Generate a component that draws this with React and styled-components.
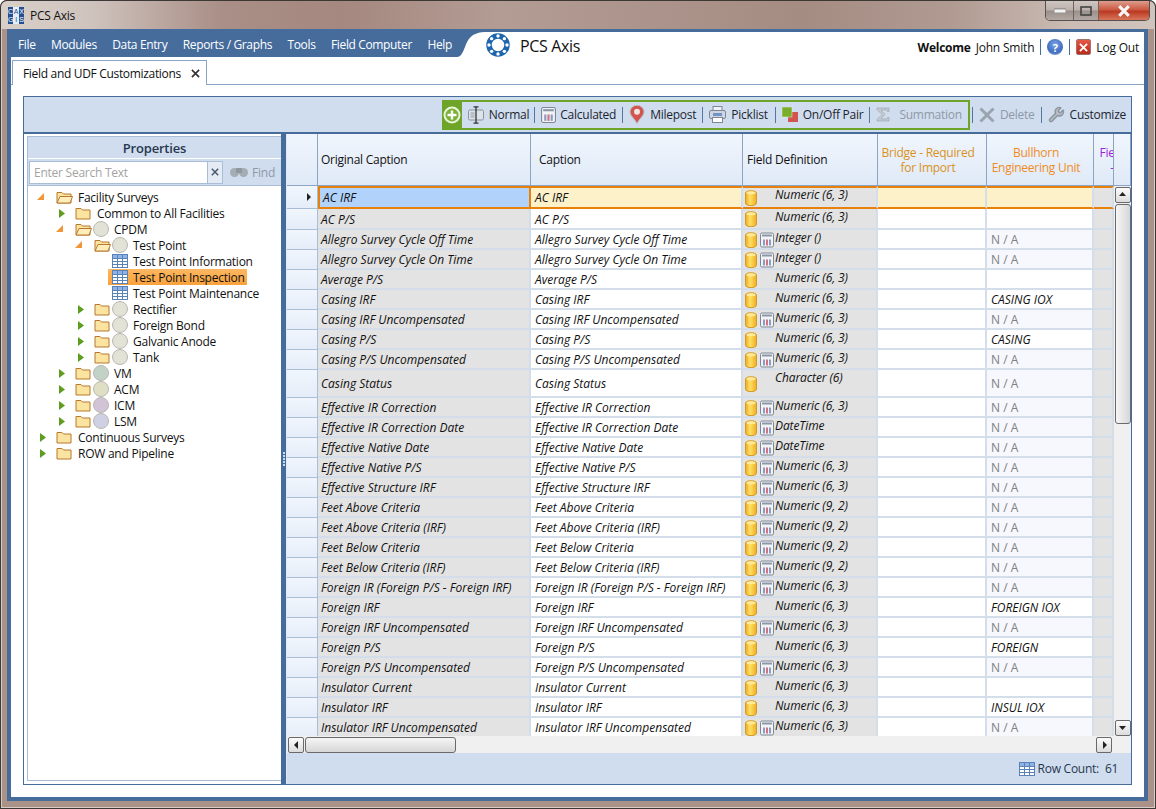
import React from 'react';
import styled, { createGlobalStyle } from 'styled-components';
import { Wrench } from 'lucide-react';

const BLUE = '#466c9c';
const LINE = '#8aa4c4';
const CELLLINE = '#d3deea';
const ORANGE = '#e8810c';
const COLS = [31, 213, 212, 135, 109, 107, 20];

const N63 = 'Numeric (6, 3)';
const N92 = 'Numeric (9, 2)';

const rows = [
  { name: 'AC IRF', type: N63, unit: '', h: 23, selected: true },
  { name: 'AC P/S', type: N63, unit: '', h: 21 },
  { name: 'Allegro Survey Cycle Off Time', calc: true, type: 'Integer ()', unit: 'N / A' },
  { name: 'Allegro Survey Cycle On Time', calc: true, type: 'Integer ()', unit: 'N / A' },
  { name: 'Average P/S', type: N63, unit: '' },
  { name: 'Casing IRF', type: N63, unit: 'CASING IOX' },
  { name: 'Casing IRF Uncompensated', calc: true, type: N63, unit: 'N / A' },
  { name: 'Casing P/S', type: N63, unit: 'CASING' },
  { name: 'Casing P/S Uncompensated', calc: true, type: N63, unit: 'N / A' },
  { name: 'Casing Status', type: 'Character (6)', unit: 'N / A', h: 28 },
  { name: 'Effective IR Correction', calc: true, type: N63, unit: 'N / A' },
  { name: 'Effective IR Correction Date', calc: true, type: 'DateTime', unit: 'N / A' },
  { name: 'Effective Native Date', calc: true, type: 'DateTime', unit: 'N / A' },
  { name: 'Effective Native P/S', calc: true, type: N63, unit: 'N / A' },
  { name: 'Effective Structure IRF', calc: true, type: N63, unit: 'N / A' },
  { name: 'Feet Above Criteria', calc: true, type: N92, unit: 'N / A' },
  { name: 'Feet Above Criteria (IRF)', calc: true, type: N92, unit: 'N / A' },
  { name: 'Feet Below Criteria', calc: true, type: N92, unit: 'N / A' },
  { name: 'Feet Below Criteria (IRF)', calc: true, type: N92, unit: 'N / A' },
  { name: 'Foreign IR (Foreign P/S - Foreign IRF)', calc: true, type: N63, unit: 'N / A' },
  { name: 'Foreign IRF', type: N63, unit: 'FOREIGN IOX' },
  { name: 'Foreign IRF Uncompensated', calc: true, type: N63, unit: 'N / A' },
  { name: 'Foreign P/S', type: N63, unit: 'FOREIGN' },
  { name: 'Foreign P/S Uncompensated', calc: true, type: N63, unit: 'N / A' },
  { name: 'Insulator Current', type: N63, unit: '' },
  { name: 'Insulator IRF', type: N63, unit: 'INSUL IOX' },
  { name: 'Insulator IRF Uncompensated', calc: true, type: N63, unit: 'N / A' },
];

const tree = [
  { level: 0, arrow: 'open', folder: 'open', text: 'Facility Surveys' },
  { level: 1, arrow: 'closed', folder: 'closed', text: 'Common to All Facilities' },
  { level: 1, arrow: 'open', folder: 'open', dot: '#e2e2d6', text: 'CPDM' },
  { level: 2, arrow: 'open', folder: 'open', dot: '#e2e2d6', text: 'Test Point' },
  { level: 3, grid: true, text: 'Test Point Information' },
  { level: 3, grid: true, text: 'Test Point Inspection', active: true },
  { level: 3, grid: true, text: 'Test Point Maintenance' },
  { level: 2, arrow: 'closed', folder: 'closed', dot: '#e2e2d6', text: 'Rectifier' },
  { level: 2, arrow: 'closed', folder: 'closed', dot: '#e2e2d6', text: 'Foreign Bond' },
  { level: 2, arrow: 'closed', folder: 'closed', dot: '#e2e2d6', text: 'Galvanic Anode' },
  { level: 2, arrow: 'closed', folder: 'closed', dot: '#e2e2d6', text: 'Tank' },
  { level: 1, arrow: 'closed', folder: 'closed', dot: '#c3d2c6', text: 'VM' },
  { level: 1, arrow: 'closed', folder: 'closed', dot: '#dfdfc6', text: 'ACM' },
  { level: 1, arrow: 'closed', folder: 'closed', dot: '#d3c3d6', text: 'ICM' },
  { level: 1, arrow: 'closed', folder: 'closed', dot: '#d0d0e4', text: 'LSM' },
  { level: 0, arrow: 'closed', folder: 'closed', text: 'Continuous Surveys' },
  { level: 0, arrow: 'closed', folder: 'closed', text: 'ROW and Pipeline' },
];

const Global = createGlobalStyle`
  html, body { margin: 0; padding: 0; background: #fff; }
  body { font: 12px "Open Sans", "Noto Sans", sans-serif; letter-spacing: -0.25px; color: #111; }
  * { box-sizing: border-box; }
`;

const Frame = styled.div`
  width: 1156px;
  height: 809px;
  display: flex;
  flex-direction: column;
  padding: 0 8px 8px 7px;
  border-radius: 7px 7px 0 0;
  background: #ab9289;
  box-shadow: inset 0 0 0 1px #3c3836, inset 0 0 0 2px #d8ccc6;
  overflow: hidden;
`;

const TitleBar = styled.div`
  height: 29px;
  flex: none;
  margin: 0 -8px 0 -7px;
  padding: 0 6px 3px 7px;
  display: flex;
  align-items: flex-start;
  border-radius: 7px 7px 0 0;
  border: 1px solid #3c3836;
  border-bottom: 0;
  background: linear-gradient(90deg, #d9d0ca 0, #cfc3bd 90px, #a98f87 220px, #a5887f 340px, #b39c94 500px, #a58c83 800px, #b09a91 950px, #cbbcb4 1070px, #cfc4bd 1156px);
`;

const AppTitle = styled.span`
  margin: 6px 0 0 6px;
  color: #111;
`;

const WinButtons = styled.div`
  margin-left: auto;
  margin-right: -1px;
  display: flex;
  height: 20px;
  border: 1px solid #57504d;
  border-top: 0;
  border-radius: 0 0 5px 5px;
  overflow: hidden;
`;

const WinButton = styled.div`
  width: ${p => p.$w}px;
  display: flex;
  align-items: center;
  justify-content: center;
  border-right: 1px solid #6d6460;
  background: ${p => p.$close
    ? 'linear-gradient(#dd9d8c 0, #cc5a43 45%, #bb3a24 55%, #d8765a 100%)'
    : 'linear-gradient(#cfc6c1 0, #bcb1ac 48%, #9b8f8a 52%, #b2a8a3 100%)'};
  &:last-child { border-right: 0; }
`;

const Client = styled.div`
  flex: 1;
  display: flex;
  flex-direction: column;
  min-height: 0;
  background: #fff;
  border: 4px solid ${BLUE};
  border-top-width: 3px;
`;

const TopBar = styled.div`
  height: 25px;
  display: flex;
  align-items: stretch;
  flex: none;
`;

const Menu = styled.div`
  width: 446px;
  flex: none;
  display: flex;
  align-items: center;
  gap: 15.5px;
  padding-left: 7px;
  color: #fff;
  white-space: nowrap;
  background: ${BLUE};
  letter-spacing: -0.36px;
`;

const LogoRow = styled.div`
  display: flex;
  align-items: center;
  margin-left: 2px;
  gap: 10px;
  padding-top: 3px;
  font-size: 16px;
  letter-spacing: -0.35px;
`;

const UserArea = styled.div`
  margin-left: auto;
  margin-right: 5px;
  display: flex;
  align-items: center;
  gap: 5px;
  padding-top: 5px;
  letter-spacing: -0.2px;
`;

const Welcome = styled.b`
  font-weight: 700;
  letter-spacing: -0.25px;
`;

const VSep = styled.span`
  width: 1px;
  height: ${p => p.$h || 16}px;
  margin: 0 ${p => p.$gap || 0}px;
  background: ${BLUE};
`;

const HelpBall = styled.span`
  width: 16px;
  height: 16px;
  border-radius: 50%;
  display: flex;
  align-items: center;
  justify-content: center;
  font-size: 11px;
  font-weight: 700;
  color: #fff;
  background: radial-gradient(circle at 50% 35%, #7ea6e6, #3f6dc0 60%, #b7c6de 100%);
`;

const RedBox = styled.span`
  width: 15px;
  height: 16px;
  border-radius: 2px;
  display: flex;
  align-items: center;
  justify-content: center;
  background: linear-gradient(#e45a45, #b92a1c);
  border: 1px solid #a0736a;
`;

const TabStrip = styled.div`
  height: 28px;
  flex: none;
  display: flex;
  align-items: flex-end;
  padding-left: 1px;
  border-bottom: 1px solid ${LINE};
`;

const Tab = styled.div`
  width: 195px;
  height: 25px;
  margin-bottom: -1px;
  display: flex;
  align-items: center;
  justify-content: space-between;
  padding: 0 6px 0 10px;
  background: #fff;
  border: 1px solid ${LINE};
  border-bottom: 0;
  letter-spacing: -0.32px;
`;

const Content = styled.div`
  flex: 1;
  min-height: 0;
  display: flex;
  padding: 11px 12px 12px;
`;

const Panel = styled.div`
  flex: 1;
  min-width: 0;
  display: flex;
  flex-direction: column;
  border: 1px solid ${BLUE};
`;

const Toolbar = styled.div`
  height: 35px;
  flex: none;
  display: flex;
  align-items: center;
  justify-content: flex-end;
  padding-right: 5px;
  background: #d0ddee;
`;

const NewGroup = styled.div`
  height: 30px;
  display: flex;
  align-items: center;
  border: 2px solid #6ea428;
  border-left: 0;
  padding-right: 6px;
`;

const PlusBlock = styled.div`
  width: 20px;
  height: 30px;
  margin: -2px 6px -2px 0;
  display: flex;
  align-items: center;
  justify-content: center;
  background: #6ea428;
`;

const ToolItem = styled.div`
  display: flex;
  align-items: center;
  gap: ${p => p.$gap || 5}px;
  color: ${p => (p.$off ? '#8d99a6' : '#1c2530')};
`;

const ToolSep = styled.span`
  width: 1px;
  height: 16px;
  margin: 0 6px 0 ${p => p.$left || 6}px;
  background: #54779f;
`;

const Split = styled.div`
  flex: 1;
  min-height: 0;
  display: flex;
  border-top: 2px solid ${BLUE};
`;

const LeftWrap = styled.div`
  width: 257px;
  flex: none;
  padding: 2px 0 3px 3px;
  background: #fff;
  display: flex;
`;

const Pane = styled.div`
  flex: 1;
  min-width: 0;
  display: flex;
  flex-direction: column;
  border: 1px solid #a9bdd6;
  border-right: 0;
`;

const PaneTitle = styled.div`
  height: 21px;
  flex: none;
  display: flex;
  align-items: center;
  justify-content: center;
  background: #d0ddee;
  color: #26384f;
  font-size: 13px;
  font-weight: 600;
  letter-spacing: -0.2px;
`;

const SearchRow = styled.div`
  height: 28px;
  flex: none;
  display: flex;
  align-items: center;
  padding: 0 6px 0 1px;
  background: #d0ddee;
  border-top: 1px solid #fff;
  border-bottom: 1px solid #a9bdd6;
`;

const SearchBox = styled.div`
  width: 179px;
  height: 23px;
  display: flex;
  align-items: center;
  padding-left: 4px;
  background: #fff;
  border: 1px solid #a9bdd6;
  color: #a3a3a3;
`;

const SearchClear = styled.div`
  width: 15px;
  height: 23px;
  display: flex;
  align-items: center;
  justify-content: center;
  background: #e4ebf5;
  border: 1px solid #a9bdd6;
  border-left: 0;
`;

const FindBtn = styled.div`
  margin-left: auto;
  display: flex;
  align-items: center;
  gap: 4px;
  color: #8d99a6;
`;

const TreeBox = styled.div`
  flex: 1;
  padding-top: 3px;
  background: #fff;
`;

const TreeRow = styled.div`
  height: 16px;
  display: flex;
  align-items: center;
  padding-left: ${p => p.$level * 19}px;
`;

const ArrowSlot = styled.span`
  width: ${p => p.$w}px;
  flex: none;
  display: flex;
  padding-left: ${p => (p.$closed ? 12 : 9)}px;
  align-items: center;
`;

const TreeLabel = styled.span`
  display: flex;
  align-items: center;
  height: 16px;
  gap: 5px;
  margin-left: ${p => (p.$active ? -4 : 0)}px;
  padding: ${p => (p.$active ? '0 2px 0 4px' : '0')};
  background: ${p => (p.$active ? 'linear-gradient(#fdb862, #f9a13c)' : 'transparent')};
`;

const Dot = styled.span`
  width: 16px;
  height: 16px;
  margin: 0 0 0 -4px;
  border-radius: 50%;
  flex: none;
  background: ${p => p.$c};
  border: 1px solid #b9b9b0;
`;

const Splitter = styled.div`
  width: 5px;
  flex: none;
  display: flex;
  flex-direction: column;
  align-items: center;
  justify-content: center;
  gap: 1px;
  background: ${BLUE};
  i { width: 2px; height: 2px; background: #cfdcec; }
`;

const GridPane = styled.div`
  flex: 1;
  min-width: 0;
  display: flex;
  flex-direction: column;
  border-left: 1px solid #dfe9f5;
`;

const HeadRow = styled.div`
  height: 52px;
  flex: none;
  display: flex;
  background: linear-gradient(#f1f6fd, #dfe9f7);
  border-bottom: 1px solid ${LINE};
`;

const HeadCell = styled.div`
  width: ${p => p.$w}px;
  flex: none;
  display: flex;
  align-items: center;
  justify-content: ${p => (p.$center ? 'center' : 'flex-start')};
  text-align: ${p => (p.$center ? 'center' : 'left')};
  padding: ${p => (p.$center ? '0 10px 0 2px' : `0 0 0 ${p.$pad || 0}px`)};
  color: ${p => p.$c || '#111'};
  line-height: 15px;
  overflow: hidden;
  border-right: 1px solid ${LINE};
`;

const ClippedHead = styled.span`
  width: 28px;
  flex: none;
  text-align: center;
`;

const Body = styled.div`
  height: 550px;
  flex: none;
  display: flex;
`;

const RowsClip = styled.div`
  width: 827px;
  flex: none;
  overflow: hidden;
  background: #e3e3e3;
`;

const Row = styled.div`
  height: ${p => p.$h}px;
  display: flex;
`;

const Cell = styled.div`
  width: ${p => p.$w}px;
  flex: none;
  display: flex;
  align-items: center;
  padding-left: ${p => p.$pad || 0}px;
  padding-top: ${p => (p.$sel ? 0 : 1)}px;
  white-space: nowrap;
  overflow: hidden;
  font-style: ${p => (p.$plain ? 'normal' : 'italic')};
  letter-spacing: ${p => p.$track || 0}px;
  color: ${p => (p.$plain ? '#808080' : '#111')};
  background: ${p => p.$bg};
  border-right: 2px solid ${CELLLINE};
  border-bottom: 2px solid ${CELLLINE};
  ${p => p.$sel && `border-top: 2px solid ${ORANGE}; border-bottom: 2px solid ${ORANGE}; border-right-color: ${CELLLINE};`}
  ${p => p.$box && `border-left: 2px solid ${ORANGE}; border-right: 2px solid ${ORANGE};`}
`;

const RowHead = styled.div`
  width: 31px;
  flex: none;
  display: flex;
  align-items: center;
  justify-content: flex-end;
  padding-right: 5px;
  background: linear-gradient(#f1f6fd, #e4edf8);
  border-right: 1px solid #a9bdd6;
  border-bottom: 1px solid #a9bdd6;
`;

const TypeText = styled.span`
  margin-left: 1px;
  align-self: flex-start;
  line-height: 14px;
  letter-spacing: -0.1px;
`;

const IconSlot = styled.span`
  width: ${p => p.$w}px;
  margin-left: ${p => p.$m}px;
  flex: none;
  display: flex;
`;

const VScroll = styled.div`
  width: 17px;
  flex: none;
  display: flex;
  flex-direction: column;
  align-items: center;
  padding-top: 1px;
  background: #f0f0f0;
`;

const ScrollGap = styled.div`
  flex: 1;
`;

const ScrollBtn = styled.div`
  width: 16px;
  height: 16px;
  flex: none;
  display: flex;
  align-items: center;
  justify-content: center;
  border: 1px solid #6a6a6a;
  border-radius: 2px;
  background: linear-gradient(#fbfbfb, #dcdcdc);
`;

const VThumb = styled.div`
  width: 16px;
  height: 220px;
  margin-top: 1px;
  flex: none;
  border: 1px solid #6a6a6a;
  border-radius: 3px;
  background: linear-gradient(90deg, #f6f6f6, #d6d6d6);
`;

const HScroll = styled.div`
  height: 17px;
  flex: none;
  display: flex;
  align-items: center;
  padding: 0 19px 0 1px;
  background: #f0f0f0;
`;

const HThumb = styled.div`
  width: 151px;
  height: 16px;
  margin-left: 1px;
  border: 1px solid #6a6a6a;
  border-radius: 3px;
  background: linear-gradient(#f6f6f6, #d6d6d6);
`;

const CountBar = styled.div`
  flex: 1;
  display: flex;
  align-items: center;
  justify-content: flex-end;
  gap: 3px;
  padding-right: 1px;
  background: #d0ddee;
  color: #26384f;
`;

const CountValue = styled.span`
  width: 25px;
  margin-left: 3px;
`;

const Tri = ({ dir = 'down', c = '#222' }) => {
  const pts = { down: '0,2 7,2 3.5,6', up: '0,5 7,5 3.5,1', left: '5,0 5,8 1,4', right: '2,0 2,8 6,4' };
  return <svg width="7" height="8" viewBox="0 0 7 8"><polygon points={pts[dir]} fill={c} /></svg>;
};

const TreeArrow = ({ kind }) => kind === 'open'
  ? <svg width="8" height="8" viewBox="0 0 8 8"><polygon points="0,7 7,7 7,0" fill="#f0953a" /></svg>
  : <svg width="6" height="9" viewBox="0 0 6 9"><polygon points="0,0 6,4.5 0,9" fill="#5d9e22" /></svg>;

const Folder = ({ open }) => (
  <svg width="17" height="14" viewBox="0 0 17 14" style={{ flex: 'none' }}>
    <path d="M1 2.5h5l1.5 1.5h7.5v9h-14z" fill="#fbe3a0" stroke="#b8792c" />
    {open && <path d="M1 13l3-6.5h12.5l-2.5 6.5z" fill="#fdeebc" stroke="#b8792c" />}
  </svg>
);

const GridIcon = () => (
  <svg width="16" height="14" viewBox="0 0 16 14" style={{ flex: 'none' }}>
    <rect x="0.5" y="0.5" width="15" height="13" fill="#fff" stroke="#5a82b8" />
    <rect x="1" y="1" width="14" height="3" fill="#8fb3e4" />
    <path d="M0.5 4.5h15M0.5 7.5h15M0.5 10.5h15M5.5 0.5v13M10.5 0.5v13" stroke="#5a82b8" fill="none" />
  </svg>
);

const Cylinder = () => (
  <svg width="12" height="16" viewBox="0 0 12 16">
    <defs>
      <linearGradient id="cyl" x1="0" x2="1" y1="0" y2="0">
        <stop offset="0" stopColor="#eeaa1e" />
        <stop offset="0.4" stopColor="#ffe066" />
        <stop offset="1" stopColor="#efae20" />
      </linearGradient>
    </defs>
    <path d="M0.5 3c0-3 11-3 11 0v10c0 3.500-11 3.500-11 0z" fill="url(#cyl)" stroke="#d69a2a" />
    <ellipse cx="6" cy="2.800" rx="4.500" ry="1.500" fill="#ffeb9c" />
  </svg>
);

const CalcIcon = ({ w = 14, h = 16 }) => (
  <svg width={w} height={h} viewBox="0 0 14 15">
    <rect x="0.5" y="0.5" width="13" height="14" rx="1.500" fill="#f1f3f7" stroke="#7d8796" />
    <rect x="2" y="2" width="10" height="2" fill="#8d97a8" />
    <rect x="3" y="7" width="2" height="6" fill="#8a9cc4" />
    <rect x="6" y="7" width="2" height="6" fill="#d0757d" />
    <rect x="9" y="7" width="2" height="6" fill="#8a9cc4" />
  </svg>
);

const PlusIcon = () => (
  <svg width="18" height="18" viewBox="0 0 18 18">
    <circle cx="9" cy="9" r="7.500" fill="#79b234" stroke="#eaf4dc" strokeWidth="2" />
    <path d="M9 4.500v9M4.500 9h9" stroke="#fff" strokeWidth="2.400" />
  </svg>
);

const NormalIcon = () => (
  <svg width="16" height="18" viewBox="0 0 16 18">
    <rect x="0.5" y="4" width="15" height="10" rx="1.500" fill="#dde3ea" stroke="#8c939c" />
    <rect x="2.500" y="6" width="4" height="6" fill="#b9c0ca" />
    <path d="M8 1v16M5.500 0.800h5M5.500 17.200h5" stroke="#333" strokeWidth="1.300" fill="none" />
  </svg>
);

const PinIcon = () => (
  <svg width="16" height="19" viewBox="0 0 16 19">
    <path d="M8 18.500C5 13 1 10.500 1 6.800a7 6.500 0 0 1 14 0C15 10.500 11 13 8 18.500z" fill="#d2564f" stroke="#b9bdc2" />
    <circle cx="8" cy="6.800" r="3" fill="#f1e5df" />
  </svg>
);

const PicklistIcon = () => (
  <svg width="17" height="17" viewBox="0 0 17 17">
    <rect x="4" y="0.500" width="9" height="5" fill="#eef1f5" stroke="#7d8796" />
    <rect x="0.500" y="4.500" width="16" height="8" rx="1.500" fill="#cfd6df" stroke="#7d8796" />
    <rect x="4" y="7" width="9" height="3" fill="#6f94c9" />
    <rect x="3.500" y="11.500" width="10" height="5" fill="#fff" stroke="#7d8796" />
  </svg>
);

const OnOffIcon = () => (
  <svg width="16" height="15" viewBox="0 0 16 15">
    <rect x="6" y="5" width="10" height="10" fill="#d2564f" />
    <rect x="0" y="0" width="10" height="10" fill="#79ae2c" stroke="#e6efd5" strokeWidth="0.500" />
  </svg>
);

const SigmaIcon = () => (
  <svg width="15" height="15" viewBox="0 0 15 15">
    <path d="M1 1h12v3.500h-1.500L11 3H5l4 4.500L5 12h6l.5-1.500H13V14H1v-1.500L6 7.500 1 2.500z" fill="#c3cad2" stroke="#96a0ab" strokeWidth="0.600" />
  </svg>
);

const DeleteIcon = () => (
  <svg width="16" height="16" viewBox="0 0 16 16">
    <path d="M1.500 1.500L14.500 14.500M14.500 1.500L1.500 14.500" stroke="#9aa4ae" strokeWidth="3" />
  </svg>
);

const Binoculars = () => (
  <svg width="18" height="12" viewBox="0 0 18 12">
    <circle cx="4.500" cy="6.500" r="4.500" fill="#a4acb4" />
    <circle cx="13.500" cy="6.500" r="4.500" fill="#a4acb4" />
    <rect x="6" y="2" width="6" height="5" fill="#8f979f" />
  </svg>
);

const CrossMark = ({ s = 9, c = '#fff', w = 2 }) => (
  <svg width={s} height={s} viewBox="0 0 10 10">
    <path d="M1 1L9 9M9 1L1 9" stroke={c} strokeWidth={w} />
  </svg>
);

const Logo = () => (
  <svg width="24" height="24" viewBox="0 0 24 24" style={{ flex: 'none', marginTop: -3 }}>
    <circle cx="12" cy="12" r="9" fill="none" stroke="#1d66ad" strokeWidth="5.500" />
    {[0, 45, 90, 135, 180, 225, 270, 315].map(a => (
      <circle key={a} cx={12 + 9 * Math.cos(a * Math.PI / 180)} cy={12 + 9 * Math.sin(a * Math.PI / 180)} r="1.700" fill="#fff" />
    ))}
  </svg>
);

const AppIcon = () => (
  <svg width="16" height="17" viewBox="0 0 16 17" style={{ marginTop: 6, flex: 'none' }} fontSize="7" fontFamily="Liberation Sans" textAnchor="middle">
    <rect width="16" height="17" fill="#e8eef6" />
    <rect x="0" y="0" width="5" height="17" fill="#24508f" />
    <rect x="11" y="0" width="5" height="17" fill="#24508f" />
    <text x="2.500" y="7" fill="#fff">C</text>
    <text x="8" y="7" fill="#24508f">A</text>
    <text x="13.500" y="7" fill="#fff">X</text>
    <text x="2.500" y="15" fill="#fff">G</text>
    <text x="8" y="15" fill="#24508f">I</text>
    <text x="13.500" y="15" fill="#fff">S</text>
  </svg>
);

const MenuTail = () => (
  <svg width="27" height="25" viewBox="0 0 27 25" style={{ flex: 'none' }}>
    <path d="M0 0H27C14 1 11 7 8 15C6 20 4 25 0 25Z" fill={BLUE} />
  </svg>
);

const Tool = ({ icon, label, off, gap }) => (
  <ToolItem $off={off} $gap={gap}>{icon}<span>{label}</span></ToolItem>
);

function TreeItem({ node }) {
  return (
    <TreeRow $level={node.level}>
      <ArrowSlot $w={node.grid ? 27 : 28} $closed={node.arrow === 'closed'}>
        {node.arrow && <TreeArrow kind={node.arrow} />}
      </ArrowSlot>
      <TreeLabel $active={node.active}>
        {node.grid ? <GridIcon /> : <Folder open={node.folder === 'open'} />}
        {node.dot && <Dot $c={node.dot} />}
        {node.text}
      </TreeLabel>
    </TreeRow>
  );
}

function GridRow({ row }) {
  const sel = row.selected;
  const na = row.unit === 'N / A';
  return (
    <Row $h={row.h || 20}>
      <RowHead>{sel && <Tri dir="right" />}</RowHead>
      <Cell $w={COLS[1]} $pad={3} $bg={sel ? '#b0d2fb' : '#e3e3e3'} $sel={sel} $box={sel}>{row.name}</Cell>
      <Cell $w={COLS[2]} $pad={4} $bg={sel ? '#fcf1c8' : '#fff'} $sel={sel}>{row.name}</Cell>
      <Cell $w={COLS[3]} $bg="#e3e3e3" $sel={sel}>
        <IconSlot $w={12} $m={2}><Cylinder /></IconSlot>
        <IconSlot $w={14} $m={3}>{row.calc && <CalcIcon />}</IconSlot>
        <TypeText>{row.type}</TypeText>
      </Cell>
      <Cell $w={COLS[4]} $bg={sel ? '#fcf1c8' : '#fff'} $sel={sel} />
      <Cell $w={COLS[5]} $pad={4} $plain={na} $bg={sel ? '#fcf1c8' : na ? '#f6f8fd' : '#fff'} $sel={sel}>{row.unit}</Cell>
      <Cell $w={COLS[6]} $bg="#e3e3e3" $sel={sel} />
    </Row>
  );
}

export default function App() {
  return (
    <Frame>
      <Global />
      <TitleBar>
        <AppIcon />
        <AppTitle>PCS Axis</AppTitle>
        <WinButtons>
          <WinButton $w={28}><svg width="12" height="5"><rect width="12" height="4" y="1" fill="#f4f4f4" stroke="#555" strokeWidth="0.600" /></svg></WinButton>
          <WinButton $w={25}><svg width="12" height="10"><rect x="1" y="1" width="10" height="8" fill="none" stroke="#444" strokeWidth="1.600" /></svg></WinButton>
          <WinButton $w={50} $close><CrossMark s={12} c="#f6f6f6" w={2.600} /></WinButton>
        </WinButtons>
      </TitleBar>
      <Client>
        <TopBar>
          <Menu>
            {['File', 'Modules', 'Data Entry', 'Reports / Graphs', 'Tools', 'Field Computer', 'Help'].map(m => <span key={m}>{m}</span>)}
          </Menu>
          <MenuTail />
          <LogoRow><Logo />PCS Axis</LogoRow>
          <UserArea>
            <Welcome>Welcome</Welcome>
            <span>John Smith</span>
            <VSep $gap={1} />
            <HelpBall>?</HelpBall>
            <VSep $gap={1} />
            <RedBox><CrossMark /></RedBox>
            <span>Log Out</span>
          </UserArea>
        </TopBar>
        <TabStrip>
          <Tab>
            <span>Field and UDF Customizations</span>
            <CrossMark s={9} c="#333" w={1.800} />
          </Tab>
        </TabStrip>
        <Content>
          <Panel>
            <Toolbar>
              <NewGroup>
                <PlusBlock><PlusIcon /></PlusBlock>
                <Tool icon={<NormalIcon />} label="Normal" />
                <ToolSep $left={5} />
                <Tool icon={<CalcIcon w={15} h={16} />} label="Calculated" gap={4} />
                <ToolSep />
                <Tool icon={<PinIcon />} label="Milepost" />
                <ToolSep />
                <Tool icon={<PicklistIcon />} label="Picklist" />
                <ToolSep $left={7} />
                <Tool icon={<OnOffIcon />} label="On/Off Pair" />
                <ToolSep />
                <Tool icon={<SigmaIcon />} label="Summation" off gap={8} />
              </NewGroup>
              <ToolSep $left={2} />
              <Tool icon={<DeleteIcon />} label="Delete" off />
              <ToolSep />
              <Tool icon={<Wrench size={17} fill="#b6bdc5" color="#8b949e" />} label="Customize" />
            </Toolbar>
            <Split>
              <LeftWrap>
                <Pane>
                  <PaneTitle>Properties</PaneTitle>
                  <SearchRow>
                    <SearchBox>Enter Search Text</SearchBox>
                    <SearchClear><CrossMark s={8} c="#44566c" w={1.800} /></SearchClear>
                    <FindBtn><Binoculars />Find</FindBtn>
                  </SearchRow>
                  <TreeBox>
                    {tree.map(n => <TreeItem key={n.text} node={n} />)}
                  </TreeBox>
                </Pane>
              </LeftWrap>
              <Splitter><i /><i /><i /><i /><i /></Splitter>
              <GridPane>
                <HeadRow>
                  <HeadCell $w={COLS[0]} />
                  <HeadCell $w={COLS[1]} $pad={3}>Original Caption</HeadCell>
                  <HeadCell $w={COLS[2]} $pad={8}>Caption</HeadCell>
                  <HeadCell $w={COLS[3]} $pad={4}>Field Definition</HeadCell>
                  <HeadCell $w={COLS[4]} $center $c="#d8921a">Bridge - Required for Import</HeadCell>
                  <HeadCell $w={COLS[5]} $center $c="#f08c1e">Bullhorn Engineering Unit</HeadCell>
                  <HeadCell $w={COLS[6]} $pad={4} $c="#a020e0"><ClippedHead>Field -</ClippedHead></HeadCell>
                  <HeadCell $w={17} />
                </HeadRow>
                <Body>
                  <RowsClip>
                    {rows.map(r => <GridRow key={r.name} row={r} />)}
                  </RowsClip>
                  <VScroll>
                    <ScrollBtn><Tri dir="up" /></ScrollBtn>
                    <VThumb />
                    <ScrollGap />
                    <ScrollBtn><Tri dir="down" /></ScrollBtn>
                  </VScroll>
                </Body>
                <HScroll>
                  <ScrollBtn><Tri dir="left" /></ScrollBtn>
                  <HThumb />
                  <ScrollGap />
                  <ScrollBtn><Tri dir="right" /></ScrollBtn>
                </HScroll>
                <CountBar>
                  <GridIcon />
                  <span>Row Count:</span>
                  <CountValue>61</CountValue>
                </CountBar>
              </GridPane>
            </Split>
          </Panel>
        </Content>
      </Client>
    </Frame>
  );
}
